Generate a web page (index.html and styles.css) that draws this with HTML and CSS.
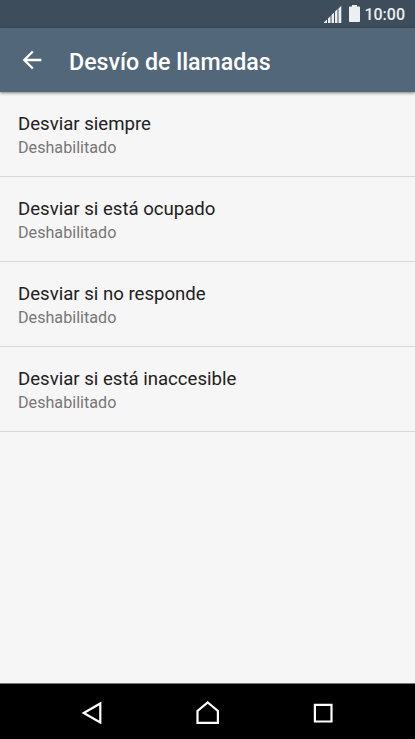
FILE: index.html
```html
<!DOCTYPE html>
<html lang="es">
<head>
<meta charset="utf-8">
<title>Desvío de llamadas</title>
<link rel="stylesheet" href="styles.css">
</head>
<body>
<div class="screen">
  <div class="status">
    <svg class="signal" width="18" height="18" viewBox="0 0 18 18"><path d="M0 18v-.8L3 14.500V18zM4 18v-4.500L6.500 11v7zM7.500 18v-8L10 7.500V18zM11 18V6.500L13.500 4v14zM14.500 18V3.500L17.300.7V18z"/></svg>
    <svg class="battery" width="11" height="17" viewBox="0 0 11 17"><path d="M3 0h5v1.500h2.300q.7 0 .7.700V16.300q0 .7-.7.700H.7q-.7 0-.7-.7V2.200q0-.7.700-.7H3z"/></svg>
    <span class="time">10:00</span>
  </div>
  <header class="bar">
    <svg class="back" width="28" height="28" viewBox="0 0 24 24"><path d="M20 11H7.830l5.590-5.590L12 4l-8 8 8 8 1.410-1.410L7.830 13H20z"/></svg>
    <h1 class="title">Desvío de llamadas</h1>
  </header>
  <main class="list">
    <div class="item"><div class="name">Desviar siempre</div><div class="state">Deshabilitado</div></div>
    <div class="item"><div class="name">Desviar si está ocupado</div><div class="state">Deshabilitado</div></div>
    <div class="item"><div class="name">Desviar si no responde</div><div class="state">Deshabilitado</div></div>
    <div class="item"><div class="name">Desviar si está inaccesible</div><div class="state">Deshabilitado</div></div>
  </main>
  <nav class="nav">
    <svg width="24" height="24" viewBox="0 0 24 24"><path d="M21.300 3.500v19L4.700 13z"/></svg>
    <svg width="24" height="24" viewBox="0 0 24 24"><path d="M2.500 22.800V11L12.700 2.500 22.900 11v11.800z"/></svg>
    <svg width="24" height="24" viewBox="0 0 24 24"><path d="M3.900 4.900h16.600v16.600H3.900z"/></svg>
  </nav>
</div>
</body>
</html>
```
FILE: styles.css
```css
* {
  box-sizing: border-box;
}

body {
  margin: 0;
  font-family: Roboto, sans-serif;
  background: #f6f6f6;
}

.screen {
  display: flex;
  flex-direction: column;
  height: 739px;
  width: 415px;
  overflow: hidden;
}

.status {
  display: flex;
  height: 28px;
  padding: 5px 10px 0 0;
  justify-content: flex-end;
  background: #3e4d5b;
  color: #eceeef;
  fill: #eceeef;
}

.signal {
  margin-right: 7px;
}

.battery {
  margin-right: 4px;
}

.time {
  font-size: 16px;
  font-weight: 500;
  line-height: 19px;
}

.bar {
  display: flex;
  align-items: center;
  height: 64px;
  padding-left: 18px;
  gap: 23px;
  background: #52677a;
  box-shadow: 0 1px 3px rgba(0, 0, 0, 0.5);
  z-index: 1;
}

.back {
  fill: #fff;
}

.title {
  margin: 3px 0 0;
  color: #fff;
  font-size: 23.200px;
  font-weight: 500;
  line-height: 28px;
}

.list {
  flex: 1;
}

.item {
  height: 85px;
  padding: 21px 18px 0;
  border-bottom: 1px solid #d6d6d6;
}

.name {
  color: #212121;
  font-size: 18.600px;
  line-height: 23px;
}

.state {
  color: #777;
  font-size: 16.150px;
  line-height: 24px;
}

.nav {
  display: flex;
  height: 56px;
  padding: 0 80px 0 79px;
  justify-content: space-between;
  align-items: center;
  background: #000;
  border-top: 1px solid #777;
  fill: none;
  stroke: #fff;
  stroke-width: 2.200;
}
```
